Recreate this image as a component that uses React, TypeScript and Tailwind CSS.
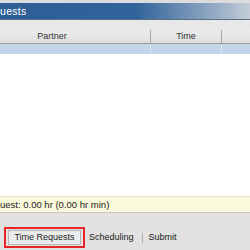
const font = { fontFamily: '"Liberation Sans", Arial, sans-serif' }

export default function App() {
  return (
    <div
      className="w-[250px] h-[250px] overflow-hidden flex flex-col bg-[#e8e8e8] text-[#1a1a1a]"
      style={font}
    >
      {/* window top strip */}
      <div className="h-[3px] bg-[#dcdcdc]" />

      {/* title bar */}
      <div className="h-[17px] flex items-center bg-gradient-to-r from-[#2d5e95] via-[#31649b] via-55% to-[#c3ccd6] border-b border-[#5b6f85]">
        <span className="text-[10.5px] leading-none text-white tracking-[0.3px]">uests</span>
      </div>

      <div className="h-[10px] bg-[#e8e8e8]" />

      {/* table header */}
      <div className="h-[14px] flex border-b border-[#9a9a9a] bg-gradient-to-b from-[#ececec] to-[#dedede] text-[9px] leading-none text-[#333]">
        <div className="w-[151px] flex items-center justify-center pr-[46px] border-r border-[#a8a8a8]">
          Partner
        </div>
        <div className="w-[71px] flex items-center justify-center border-r border-[#a8a8a8]">
          Time
        </div>
        <div className="flex-1" />
      </div>

      {/* selected row */}
      <div className="h-[10px] flex bg-[#c4d5e9]">
        <div className="w-[151px] border-r border-[#dce6f2]" />
        <div className="w-[71px] border-r border-[#dce6f2]" />
      </div>

      <div className="flex-1 bg-white" />

      {/* status strip */}
      <div className="h-[16px] flex items-center bg-[#fbf9dc] border-t border-[#e4e2c8] text-[9.5px] leading-none text-[#222] whitespace-nowrap">
        uest: 0.00 hr (0.00 hr min)
      </div>

      {/* tabs */}
      <div className="h-[38px] bg-[#e2e2e2] border-t border-[#c8c8c8] flex flex-col">
        <div className="h-[14px]" />
        <div className="flex items-center text-[9px] leading-none whitespace-nowrap">
          <div className="ml-[4px] w-[81px] h-[21px] border-2 border-[#e8262a] flex items-center justify-center">
            <div className="w-[73px] h-[15px] bg-[#ececec] border border-[#b5b5b5] flex items-center justify-center">
              Time Requests
            </div>
          </div>
          <span className="ml-[4px]">Scheduling</span>
          <span className="ml-[8px] w-px h-[10px] bg-[#b0b0b0]" />
          <span className="ml-[6px]">Submit</span>
        </div>
      </div>
    </div>
  )
}
